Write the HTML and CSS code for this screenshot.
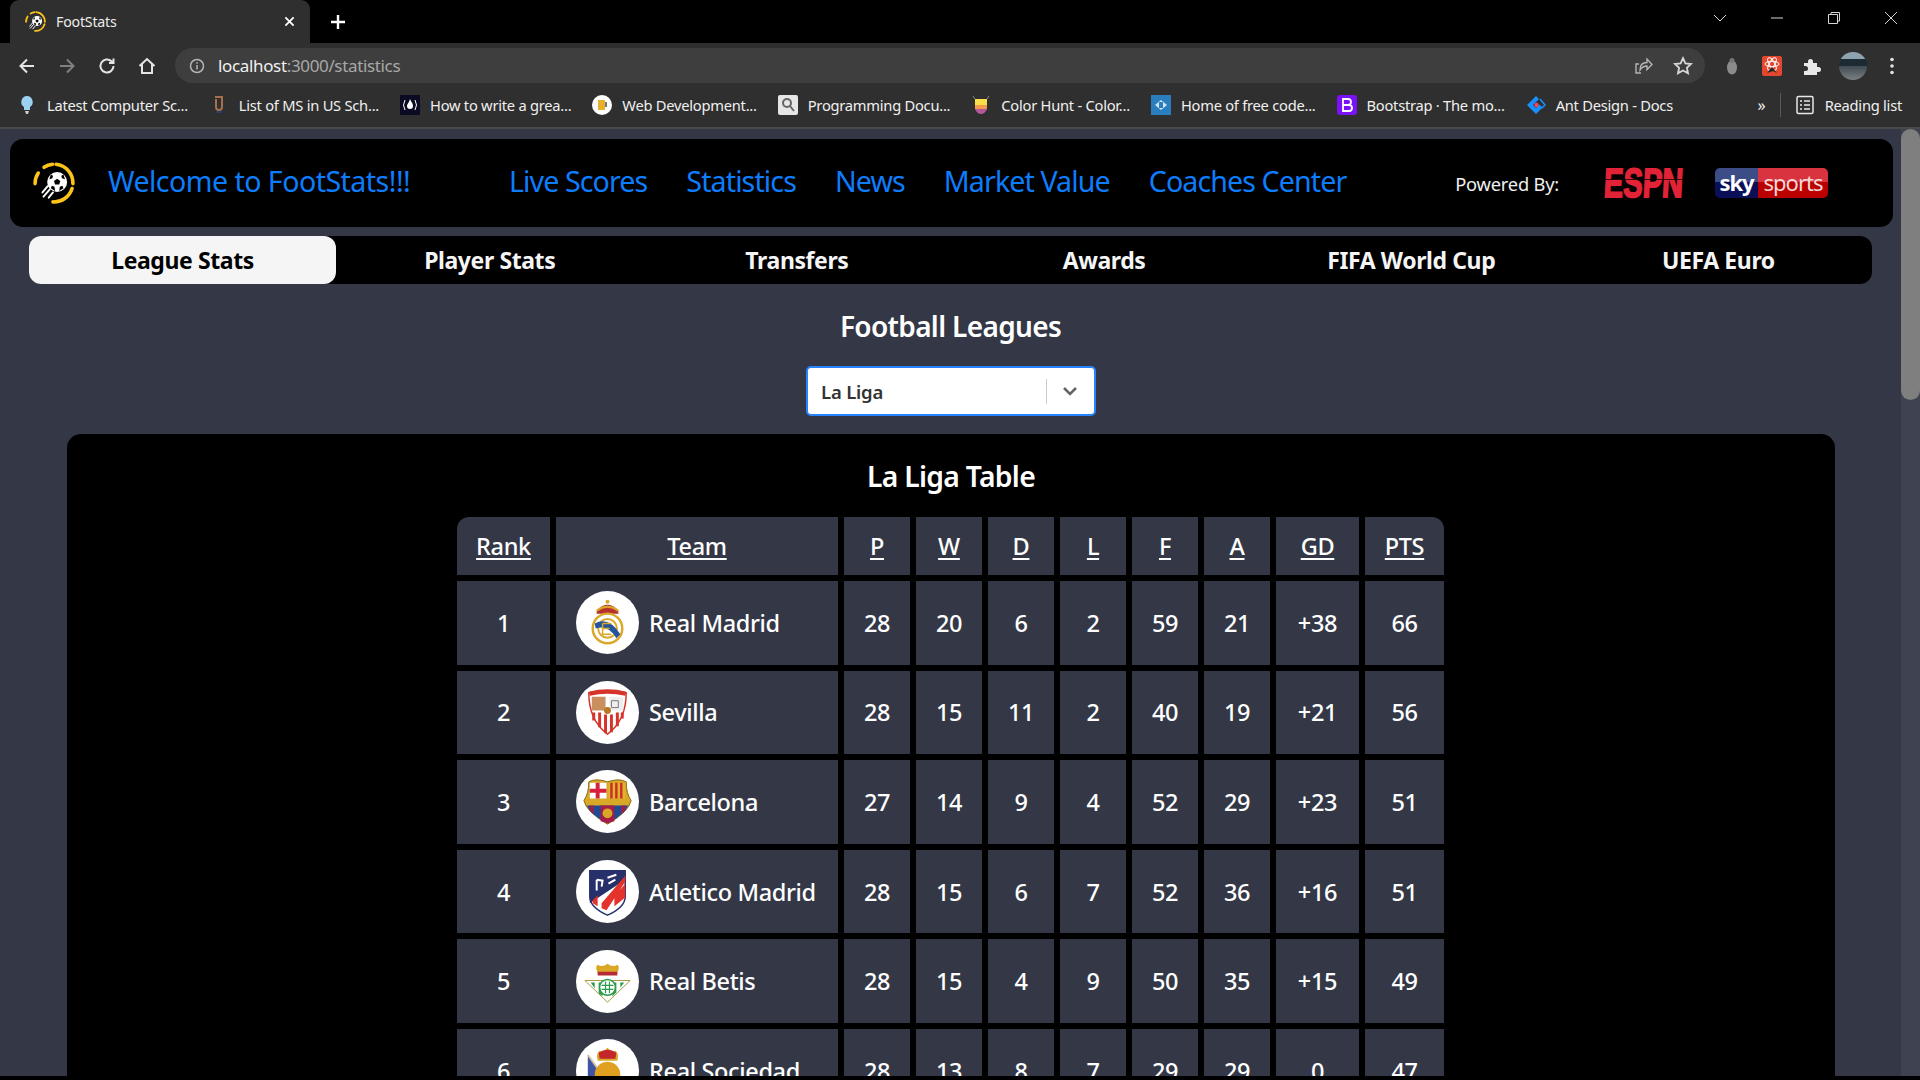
FILE: index.html
```html
<!DOCTYPE html>
<html lang="en">
<head>
<meta charset="utf-8">
<title>FootStats</title>
<link rel="stylesheet" href="styles.css">
</head>
<body>
<svg class="defs" width="0" height="0" aria-hidden="true">
  <symbol id="logo" viewBox="0 0 40 40">
    <g fill="none" stroke="#fcc419" stroke-width="3.4" stroke-linecap="round">
      <path d="M10.5 5 A18 18 0 0 1 18.6 2.1"/>
      <path d="M22 2.1 A18 18 0 0 1 38 20.6"/>
      <path d="M37.2 25.3 A18 18 0 0 1 19 38"/>
      <path d="M2 20.6 A18 18 0 0 1 5 10.5"/>
    </g>
    <circle cx="23" cy="19" r="9.5" fill="#fff"/>
    <path d="M23 16l3 2-1 3.5h-4l-1-3.5z M17 12l2 1 -.5 2.5-3 1z M29 12l-2 1 .5 2.5 3 1z M17 25l1-2.5 2.5 1 .5 4z M29 25l-1-2.5-2.5 1-.5 4z" fill="#000"/>
    <g stroke="#fff" stroke-width="1.8" stroke-linecap="round">
      <path d="M14 23l-5 6M16 26l-6 7M19 29l-4 5"/>
    </g>
  </symbol>
</svg>

<header class="tabstrip">
  <div class="tab">
    <svg class="tab-fav"><use href="#logo"/></svg>
    <span class="tab-title">FootStats</span>
    <svg class="tab-close" viewBox="0 0 12 12"><path d="M1.5 1.5l9 9M10.5 1.5l-9 9"/></svg>
  </div>
  <svg class="tab-new" viewBox="0 0 16 16"><path d="M8 1v14M1 8h14"/></svg>
  <div class="win-controls">
    <svg viewBox="0 0 14 14"><path d="M1 4l6 6 6-6"/></svg>
    <svg viewBox="0 0 14 14"><path d="M1 7h12"/></svg>
    <svg viewBox="0 0 14 14"><path d="M1.5 3.5h9v9h-9zM4 3.5V1.5h8.500v8.500h-2"/></svg>
    <svg viewBox="0 0 14 14"><path d="M1 1l12 12M13 1L1 13"/></svg>
  </div>
</header>

<div class="toolbar">
  <svg class="tb-icon" viewBox="0 0 20 20"><path d="M17 10H4M10 3.500L3.500 10l6.500 6.500"/></svg>
  <svg class="tb-icon dim" viewBox="0 0 20 20"><path d="M3 10h13M10 3.500l6.500 6.500-6.500 6.500"/></svg>
  <svg class="tb-icon" viewBox="0 0 20 20"><path d="M16.500 10a6.500 6.500 0 1 1-2-4.700L16.500 7M16.500 2.500V7H12"/></svg>
  <svg class="tb-icon" viewBox="0 0 20 20"><path d="M2.500 10L10 3l7.500 7M5 8.500V17h10V8.500"/></svg>
  <div class="omnibox">
    <svg class="omni-info" viewBox="0 0 16 16"><circle cx="8" cy="8" r="6.500"/><path d="M8 7v4.500M8 4.200v1.600"/></svg>
    <span class="url">localhost<span class="url-dim">:3000/statistics</span></span>
    <svg class="omni-share" viewBox="0 0 20 20"><path d="M8 17H3V8h3M7 14c0-5 3-7.500 7-7.500V3l5 5.500-5 5V10c-3 0-5 1-7 4z"/></svg>
    <svg class="omni-star" viewBox="0 0 20 20"><path d="M10 2.200l2.400 5.100 5.600.7-4.100 3.800 1.100 5.500-5-2.800-5 2.800 1.100-5.500L2 8l5.600-.7z"/></svg>
  </div>
  <div class="extensions">
    <svg class="ext" viewBox="0 0 20 20"><ellipse cx="10" cy="11.500" rx="5" ry="7" fill="#8b8b8b"/><circle cx="10" cy="4.500" r="2.500" fill="#777"/></svg>
    <svg class="ext" viewBox="0 0 20 20"><rect width="20" height="20" y="0" rx="2" fill="#e4472f"/><g fill="none" stroke="#fff"><ellipse cx="10" cy="8" rx="7" ry="2.700"/><ellipse cx="10" cy="8" rx="7" ry="2.700" transform="rotate(60 10 8)"/><ellipse cx="10" cy="8" rx="7" ry="2.700" transform="rotate(120 10 8)"/></g><path d="M5 17l5-6 5 6-4-2z" fill="#222"/></svg>
    <svg class="ext" viewBox="0 0 20 20"><path d="M2 7h4V5.500a2.500 2.500 0 0 1 5 0V7h4v4h1.500a2.500 2.500 0 0 1 0 5H15v3H2v-4h1.500a2.500 2.500 0 0 0 0-5H2z" fill="#e8e8e8"/></svg>
    <span class="avatar"></span>
    <svg class="ext-dots" viewBox="0 0 6 20"><circle cx="3" cy="3.500" r="1.800"/><circle cx="3" cy="10" r="1.800"/><circle cx="3" cy="16.500" r="1.800"/></svg>
  </div>
</div>

<nav class="bookmarks">
  <a class="bm"><svg viewBox="0 0 20 20"><path d="M10 1a6 6 0 0 0-3 11v3h6v-3a6 6 0 0 0-3-11z" fill="#9cd0f0"/><path d="M8 16h4l-1 3H9z" fill="#ccc"/></svg><span>Latest Computer Sc...</span></a>
  <a class="bm"><svg viewBox="0 0 20 20"><path d="M6 2h8M13 2v10a3 3 0 0 1-6 0V4" fill="none" stroke="#a5704b" stroke-width="2"/><path d="M7 17h6" stroke="#2c3c6c" stroke-width="2"/></svg><span>List of MS in US Sch...</span></a>
  <a class="bm"><svg viewBox="0 0 20 20"><rect width="20" height="20" fill="#0a0a23"/><path d="M5 5Q2 10 5 15M15 5q3 5 0 10" fill="none" stroke="#fff"/><path d="M10 4c1 3 3 4 3 7a3 3 0 0 1-6 0c0-2 2-3 3-7z" fill="#fff"/></svg><span>How to write a grea...</span></a>
  <a class="bm"><svg viewBox="0 0 20 20"><circle cx="10" cy="10" r="10" fill="#fff"/><rect x="6" y="5" width="7" height="10" fill="#e6b22c"/><rect x="13" y="7" width="2" height="5" fill="#777"/></svg><span>Web Development...</span></a>
  <a class="bm"><svg viewBox="0 0 20 20"><rect width="20" height="20" rx="2" fill="#e6e6e6"/><circle cx="9" cy="8" r="4" fill="none" stroke="#666" stroke-width="2"/><path d="M12 11l4 5" stroke="#666" stroke-width="2"/></svg><span>Programming Docu...</span></a>
  <a class="bm"><svg viewBox="0 0 20 20"><path d="M2 1l2 3M18 1l-2 3" stroke="#888"/><path d="M4 4h12v6H4z" fill="#f9e04b"/><path d="M4 10h12v4H4z" fill="#f59a4d"/><path d="M4 14h12q-2 5-6 5t-6-5z" fill="#b3589b"/></svg><span>Color Hunt - Color...</span></a>
  <a class="bm"><svg viewBox="0 0 20 20"><rect width="20" height="20" fill="#2b7ebd"/><path d="M10 5l6 5-6 5-6-5z" fill="#cde4f5"/><rect x="8" y="7" width="4" height="6" fill="#2b7ebd"/></svg><span>Home of free code...</span></a>
  <a class="bm"><svg viewBox="0 0 20 20"><rect width="20" height="20" rx="3" fill="#7b11f5"/><path d="M6 4h5a3 3 0 0 1 0 6H6zM6 10h6a3 3 0 0 1 0 6H6z" fill="none" stroke="#fff" stroke-width="1.800"/></svg><span>Bootstrap · The mo...</span></a>
  <a class="bm"><svg viewBox="0 0 20 20"><path d="M10 1L1 10l9 9 6-6-3-3-3 3-3-3 6-6z" fill="#1890ff"/><path d="M14 4l5 6-3 3-3-3" fill="none" stroke="#1890ff" stroke-width="1.500"/><circle cx="10.500" cy="10" r="2.200" fill="#f5475b"/></svg><span>Ant Design - Docs</span></a>
  <span class="bm-more">»</span>
  <span class="bm-sep"></span>
  <a class="bm bm-reading"><svg viewBox="0 0 20 20"><rect x="2" y="1.500" width="16" height="17" rx="1.500" fill="none" stroke="#e8e8e8" stroke-width="1.500"/><path d="M5 6h2M9 6h6M5 10h2M9 10h6M5 14h2M9 14h6" stroke="#e8e8e8" stroke-width="1.500"/></svg><span>Reading list</span></a>
</nav>

<div class="viewport">
  <main class="page">
    <section class="topbar">
      <svg class="brand-logo"><use href="#logo"/></svg>
      <h1 class="brand-title">Welcome to FootStats!!!</h1>
      <nav class="main-nav">
        <a>Live Scores</a>
        <a>Statistics</a>
        <a>News</a>
        <a>Market Value</a>
        <a>Coaches Center</a>
      </nav>
      <div class="powered">
        <span class="powered-label">Powered By:</span>
        <span class="espn-box"><span class="espn">ESPN</span></span>
        <span class="sky"><span class="sky-a">sky</span><span class="sky-b">sports</span></span>
      </div>
    </section>

    <div class="stat-tabs">
      <a class="stat-tab active">League Stats</a>
      <a class="stat-tab">Player Stats</a>
      <a class="stat-tab">Transfers</a>
      <a class="stat-tab">Awards</a>
      <a class="stat-tab">FIFA World Cup</a>
      <a class="stat-tab">UEFA Euro</a>
    </div>

    <h2 class="section-title">Football Leagues</h2>

    <div class="select">
      <span class="select-value">La Liga</span>
      <span class="select-sep"></span>
      <svg class="select-arrow" viewBox="0 0 20 20"><path d="M4 7l6 6 6-6"/></svg>
    </div>

    <section class="card">
      <h2 class="card-title">La Liga Table</h2>
      <table class="league">
        <colgroup>
          <col class="c-rank"><col class="c-team"><col class="c-num"><col class="c-num"><col class="c-num"><col class="c-num"><col class="c-num"><col class="c-num"><col class="c-gd"><col class="c-pts">
        </colgroup>
        <thead>
          <tr><th>Rank</th><th>Team</th><th>P</th><th>W</th><th>D</th><th>L</th><th>F</th><th>A</th><th>GD</th><th>PTS</th></tr>
        </thead>
        <tbody>
          <tr><td>1</td><td><div class="team"><span class="crest"><svg viewBox="0 0 64 64">
            <path d="M21 20q11-12 22 0v3H21z" fill="#b8302f"/><path d="M21 20q11-8 22 0" fill="none" stroke="#d9a826" stroke-width="2"/><circle cx="32" cy="11" r="2" fill="#d9a826"/>
            <circle cx="32" cy="38" r="15" fill="#fff" stroke="#d9a826" stroke-width="2.500"/><circle cx="32" cy="38" r="9.500" fill="none" stroke="#d9a826" stroke-width="2"/><path d="M19 33q14-8 26 11l-4 4Q33 34 20 38z" fill="#24549b"/><path d="M27 33h9M27 33v11h9M27 38h7" fill="none" stroke="#d9a826" stroke-width="1.500"/></svg></span>Real Madrid</div></td><td>28</td><td>20</td><td>6</td><td>2</td><td>59</td><td>21</td><td>+38</td><td>66</td></tr>
          <tr><td>2</td><td><div class="team"><span class="crest"><svg viewBox="0 0 64 64">
            <path d="M13 12q19-4 38 0q0 28-19 42Q13 40 13 12z" fill="#fff" stroke="#d6332b" stroke-width="1.500"/><path d="M13 11q19-5 38 0l-1 4q-18-4-36 0z" fill="#d6332b"/>
            <path d="M16 16h14v14H16z" fill="#c98f5e"/><path d="M34 16h14v14H34z" fill="#eee"/><path d="M36 20h7v7h-7z" fill="none" stroke="#777"/><circle cx="32" cy="30" r="3.500" fill="#b47a22"/>
            <path d="M18 32v8M24 32v15M30 34v19M36 34v18M42 32v14M47 32v6" stroke="#d6332b" stroke-width="3"/></svg></span>Sevilla</div></td><td>28</td><td>15</td><td>11</td><td>2</td><td>40</td><td>19</td><td>+21</td><td>56</td></tr>
          <tr><td>3</td><td><div class="team"><span class="crest"><svg viewBox="0 0 64 64">
            <path d="M13 12q7-4 19 0q12-4 19 0q0 12 5 19q-2 11-24 24Q10 42 8 31q5-7 5-19z" fill="#d9a826" stroke="#8a6b1c"/>
            <path d="M14 13h17v16H14z" fill="#fff"/><path d="M22 13v16M14 21h17" stroke="#d4213c" stroke-width="4"/>
            <path d="M33 13h17v16H33z" fill="#e2b32b"/><path d="M36 13v16M41 13v16M46 13v16" stroke="#c9302c" stroke-width="2.500"/>
            <path d="M11 36h42q-3 9-21 18Q14 45 11 36z" fill="#1f4a94"/><path d="M25 36h14v16l-7 2-7-2zM14 36h4v9l-4-4zM46 36h4v5l-4 4z" fill="#a51d47"/><circle cx="32" cy="44" r="5" fill="#d9a826"/></svg></span>Barcelona</div></td><td>27</td><td>14</td><td>9</td><td>4</td><td>52</td><td>29</td><td>+23</td><td>51</td></tr>
          <tr><td>4</td><td><div class="team"><span class="crest"><svg viewBox="0 0 64 64">
            <path d="M14 11h36v26q0 11-18 19Q14 48 14 37z" fill="#fff" stroke="#27306b" stroke-width="1.500"/><path d="M14 11h36v9L14 44V37z" fill="#27306b"/>
            <path d="M26 44l24-28v6L31 51l-5-2zM17 41l5-5v11l-5-3zM39 37l11-13v14l-11 9z" fill="#e4332a"/>
            <path d="M21 20v11M21 20l6 1-1 6M32 18l9-3M33 24l7-4" stroke="#fff" stroke-width="2" fill="none"/></svg></span>Atletico Madrid</div></td><td>28</td><td>15</td><td>6</td><td>7</td><td>52</td><td>36</td><td>+16</td><td>51</td></tr>
          <tr><td>5</td><td><div class="team"><span class="crest"><svg viewBox="0 0 64 64">
            <path d="M22 23q-3-6 0-8q5 3 10-1q5 4 10 1q3 2 0 8z" fill="#d9a826"/><path d="M22 22h20v4H22z" fill="#b72a35"/>
            <path d="M9 31h46L32 53z" fill="#fff" stroke="#a69a3c"/><path d="M15 33l4 6V33zM23 33v11l4 3V33zM37 33v14l4-4V33zM45 33v5l4-5z" fill="#2a9b4c"/>
            <circle cx="32" cy="38" r="8" fill="#fff" stroke="#2a9b4c" stroke-width="1.500"/><path d="M26 36h12M26 40h12M30 32v12M34 32v12" stroke="#2a9b4c" stroke-width="1.200"/></svg></span>Real Betis</div></td><td>28</td><td>15</td><td>4</td><td>9</td><td>50</td><td>35</td><td>+15</td><td>49</td></tr>
          <tr><td>6</td><td><div class="team"><span class="crest"><svg viewBox="0 0 64 64">
            <path d="M12 16l10 14-4 20L12 42z" fill="#3d55a4"/><path d="M12 16l10 14" stroke="#d9c9a0" stroke-width="2"/>
            <path d="M22 22q-2-7 2-10q4 2 8-3q4 5 8 3q4 3 2 10z" fill="#d9a826"/><path d="M23 14q9-6 18 0l-1 6H24z" fill="#c4262e"/>
            <circle cx="32" cy="36" r="13" fill="#e0a020"/><path d="M18 50h28v14H18z" fill="#3d55a4"/></svg></span>Real Sociedad</div></td><td>28</td><td>13</td><td>8</td><td>7</td><td>29</td><td>29</td><td>0</td><td>47</td></tr>
        </tbody>
      </table>
    </section>
  </main>
  <aside class="scrollbar"><span class="thumb"></span></aside>
</div>
</body>
</html>
```

FILE: styles.css
```css
* { box-sizing: border-box; }
html, body { margin: 0; height: 100%; overflow: hidden; }
body {
  display: flex;
  flex-direction: column;
  height: 1080px;
  background: #000;
  color: #fff;
  font-family: "Noto Sans", "Open Sans", sans-serif;
}
.defs { position: absolute; }
svg { display: block; flex: none; }

/* browser chrome */
.tabstrip { display: flex; align-items: center; height: 43px; padding-left: 10px; background: #000; flex: none; }
.tab { display: flex; align-items: center; width: 300px; height: 43px; padding: 0 15px; background: #2f2f2f; border-radius: 9px 9px 0 0; font-size: 14.2px; }
.tab-fav { width: 21px; height: 21px; }
.tab-title { margin-left: 10px; flex: 1; letter-spacing: -0.2px; color: #ececec; padding-bottom: 1px; }
.tab-close { width: 11px; height: 11px; fill: none; stroke: #fff; stroke-width: 2; }
.tab-new { width: 16px; height: 16px; margin-left: 20px; fill: none; stroke: #fff; stroke-width: 2.4; }
.win-controls { display: flex; margin-left: auto; align-items: center; gap: 43px; padding-right: 22px; margin-top: -7px; }
.win-controls svg { width: 14px; height: 14px; fill: none; stroke: #d6d6d6; stroke-width: 1; }

.toolbar { display: flex; align-items: center; height: 45px; padding-left: 17px; background: #2f2f2f; flex: none; }
.tb-icon { width: 20px; height: 20px; margin-right: 20px; fill: none; stroke: #e4e4e4; stroke-width: 2; }
.tb-icon.dim { stroke: #808080; }
.tb-icon:nth-of-type(4) { margin-right: 18px; }
.omnibox { display: flex; align-items: center; width: 1530px; height: 35px; border-radius: 18px; background: #3e3e3e; padding: 0 12px 0 14px; }
.omni-info { width: 16px; height: 16px; fill: none; stroke: #b5b5b5; stroke-width: 1.500; }
.url { margin-left: 13px; flex: 1; font-size: 17px; letter-spacing: -0.35px; color: #f0f0f0; padding-bottom: 1px; }
.url-dim { color: #a8a8a8; }
.omni-share, .omni-star { width: 20px; height: 20px; fill: none; stroke: #b5b5b5; stroke-width: 1.400; }
.omni-star { margin-left: 20px; stroke: #d8d8d8; stroke-width: 1.800; }
.extensions { display: flex; align-items: center; margin-left: 17px; }
.ext { width: 20px; height: 20px; margin-right: 20px; }
.avatar { width: 28px; height: 28px; border-radius: 50%; background: linear-gradient(#8fa2b0 0 25%, #1c2a33 25% 50%, #3f4b52 50%, #7b8083); margin-left: -3px; }
.ext-dots { width: 6px; height: 20px; margin-left: 22px; fill: #e4e4e4; }

.bookmarks { display: flex; align-items: center; height: 39px; padding: 0 18px 5px 17px; background: #2f2f2f; flex: none; font-size: 14.700px; color: #f0f0f0; }
.bm { display: flex; align-items: center; gap: 10px; margin-right: 21px; letter-spacing: -0.25px; white-space: nowrap; }
.bm svg { width: 20px; height: 20px; }
.bm-more { margin-left: auto; font-size: 16px; }
.bm-sep { width: 1px; height: 24px; margin: 0 14px; background: #5a5a5a; }
.bm-reading { margin-right: 0; }

.viewport { display: flex; height: 949px; border-top: 2px solid #4a4a4a; overflow: hidden; flex: none; background: #343846; }
.page { width: 1901px; flex: none; padding: 10px 0 0; overflow: hidden; }
.scrollbar { position: relative; width: 19px; flex: none; background: #3f4250; }
.thumb { position: absolute; top: 0; left: 0; width: 19px; height: 271px; border-radius: 10px; background: #7f7f7f; }

/* header */
.topbar { display: flex; align-items: center; width: 1883px; height: 88px; margin-left: 10px; padding: 0 0 0 23px; border-radius: 13px; background: #000; }
.brand-logo { width: 42px; height: 42px; }
.brand-title { margin: 0 0 0 33px; padding-bottom: 5px; width: 401px; font-size: 28.600px; font-weight: 400; color: #0d7dfc; letter-spacing: -0.55px; white-space: nowrap; }
.main-nav { display: flex; gap: 39px; padding-bottom: 5px; font-size: 28.600px; color: #0d7dfc; letter-spacing: -0.9px; white-space: nowrap; }
.powered { display: flex; align-items: center; margin-left: auto; padding-right: 65px; }
.powered-label { font-size: 18.300px; letter-spacing: -0.2px; color: #f0f0f0; margin-right: 45px; padding-top: 1px; }
.espn-box { position: relative; display: block; width: 79px; height: 30px; margin-right: 32px; }
.espn-box::after { content: ""; position: absolute; left: 0; right: 0; top: 11px; height: 1px; background: rgba(0, 0, 0, 0.7); }
.espn { display: block; width: 109px; height: 30px; font: 700 41px/30px "Liberation Sans", sans-serif; color: #e22337; -webkit-text-stroke: 1.800px #e22337; transform: scaleX(0.710) skewX(-4deg); transform-origin: left; white-space: nowrap; }
.sky { display: flex; width: 113px; height: 30px; font-size: 22px; line-height: 28px; letter-spacing: -1px; }
.sky-a { width: 43px; height: 30px; text-align: center; font-weight: 700; background: linear-gradient(#3c4c87 0 45%, #0b0f57 45%); color: #fff; border-radius: 5px 0 0 5px; }
.sky-b { flex: 1; height: 30px; text-align: center; background: linear-gradient(#d8333f 0 45%, #bb0000 45%); color: #f4d8d8; border-radius: 0 5px 5px 0; }

/* stat tabs */
.stat-tabs { display: grid; grid-template-columns: repeat(6, 1fr); width: 1843px; height: 48px; margin: 9px 0 0 29px; border-radius: 12px; background: #000; }
.stat-tab { display: flex; align-items: center; justify-content: center; border-radius: 12px; font-size: 23px; font-weight: 700; letter-spacing: -0.4px; color: #f5f5f5; }
.stat-tab.active { background: #f5f5f5; color: #000; }

.section-title { margin: 24px 0 0; height: 38px; line-height: 36px; text-align: center; font-size: 28px; font-weight: 600; letter-spacing: -0.65px; }
.select { display: flex; align-items: center; width: 290px; height: 50px; margin: 20px 0 0 806px; padding: 0 14px 0 13px; border: 2px solid #2684ff; border-radius: 5px; background: #fff; }
.select-value { flex: 1; font-size: 18.500px; font-weight: 600; color: #333; letter-spacing: -0.2px; }
.select-sep { width: 1px; height: 25px; background: #ccc; margin-right: 13px; }
.select-arrow { width: 20px; height: 20px; fill: none; stroke: #666; stroke-width: 2.600; }

/* table card */
.card { width: 1768px; height: 760px; margin: 18px 0 0 67px; padding-top: 24px; border-radius: 14px 14px 0 0; background: #000; }
.card-title { margin: 0; height: 38px; line-height: 36px; text-align: center; font-size: 28.300px; font-weight: 600; letter-spacing: -0.7px; }
.league { margin: 15px 0 0 384px; border-collapse: separate; border-spacing: 6px; table-layout: fixed; width: 999px; font-size: 23.500px; letter-spacing: -0.35px; }
.c-rank { width: 93px; }
.c-team { width: 282px; }
.c-num { width: 66px; }
.c-gd { width: 83px; }
.c-pts { width: 79px; }
.league th, .league td { background: #343846; text-align: center; padding: 0; font-weight: 500; }
.league th { height: 58px; text-decoration: underline; text-underline-offset: 3px; }
.league td { height: 83.600px; }
.league th:first-child { border-top-left-radius: 12px; }
.league th:last-child { border-top-right-radius: 12px; }
.team { display: flex; align-items: center; gap: 10px; padding-left: 20px; white-space: nowrap; }
.crest { display: flex; align-items: center; justify-content: center; width: 63px; height: 63px; border-radius: 50%; background: #fff; overflow: hidden; flex: none; }
.crest svg { width: 63px; height: 63px; }
```
